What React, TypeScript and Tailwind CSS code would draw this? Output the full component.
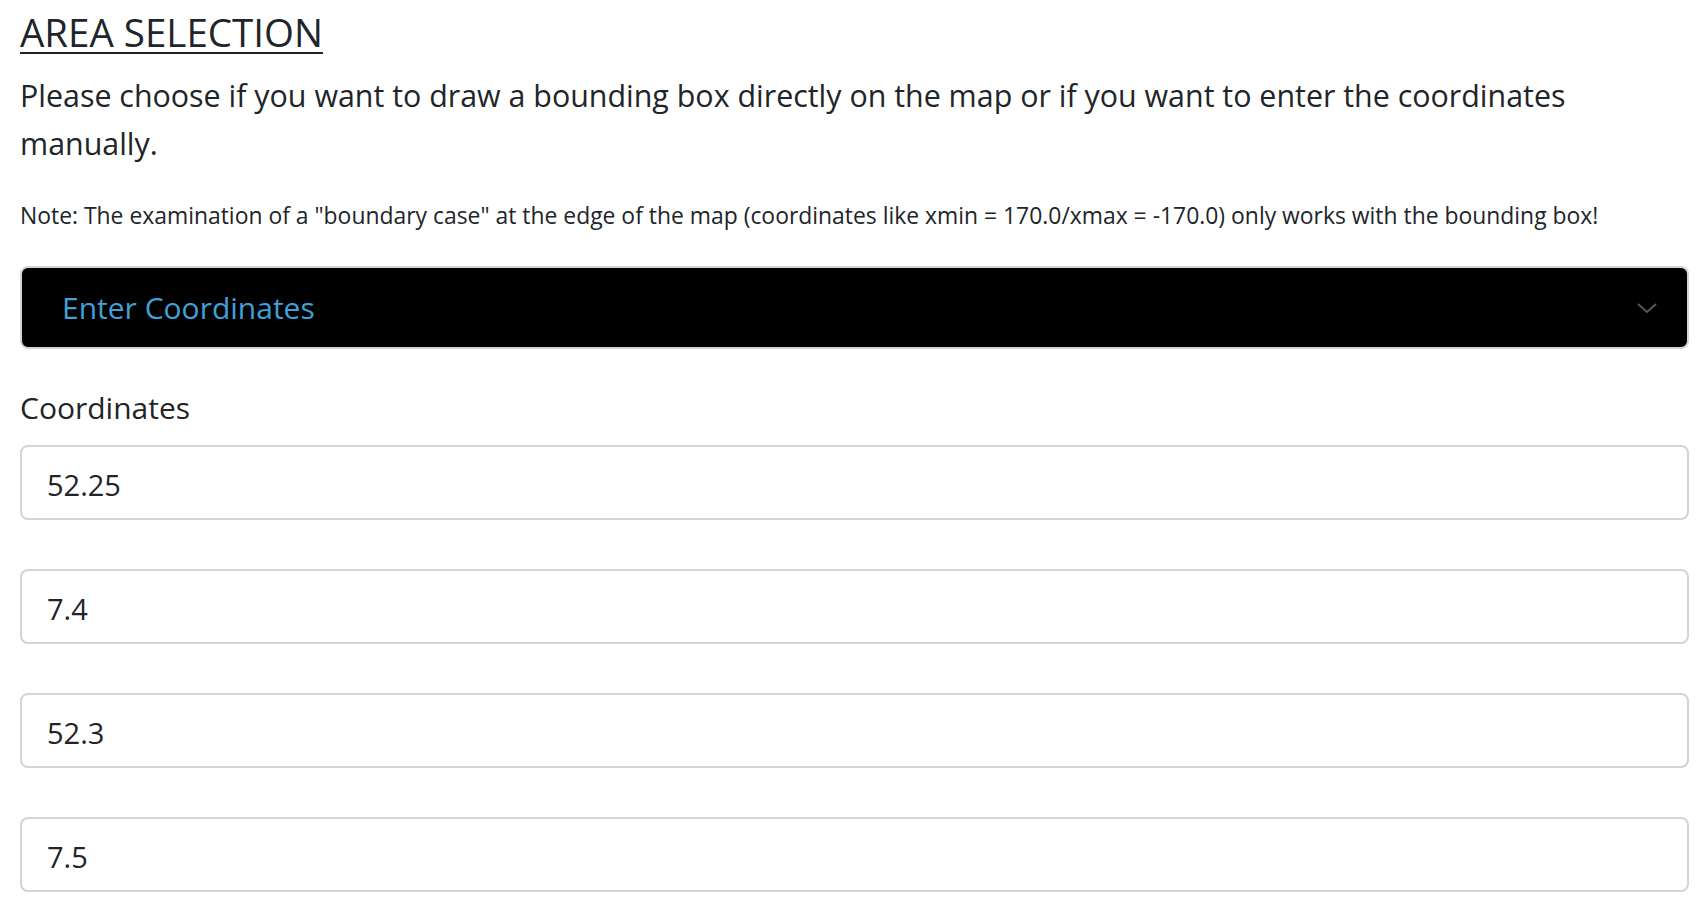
import { useState } from "react"

const values = ["52.25", "7.4", "52.3", "7.5"]

export default function App() {
  const [coords, setCoords] = useState<string[]>(values)
  const [open, setOpen] = useState(true)

  return (
    <div className="min-h-screen bg-white text-[#212529] pl-[20px] pr-[16px] pt-[8px] font-['Open_Sans',sans-serif]">
      <h2 className="text-[38.5px] leading-[48px] underline underline-offset-[5px] decoration-[2px]">
        AREA SELECTION
      </h2>
      <p className="mt-[16px] text-[30.4px] leading-[48px]">
        Please choose if you want to draw a bounding box directly on the map or if you want to enter the coordinates manually.
      </p>
      <p className="mt-[32px] text-[22.9px] leading-[32px]">
        Note: The examination of a "boundary case" at the edge of the map (coordinates like xmin = 170.0/xmax = -170.0) only works with the bounding box!
      </p>

      <button
        type="button"
        onClick={() => setOpen(!open)}
        className="mt-[34px] flex h-[83px] w-full items-center justify-between rounded-[8px] border-2 border-[#d2d4d6] bg-black pl-[40px] pr-[30px] text-left"
      >
        <span className="text-[30px] text-[#41a0d6]">Enter Coordinates</span>
        <svg width="20" height="10" viewBox="0 0 20 10" fill="none" className={open ? "" : "rotate-180"}>
          <path d="M1 1 L10 9 L19 1" stroke="#5a5a5a" strokeWidth="1.8" />
        </svg>
      </button>

      {open && (
        <div>
          <label className="mt-[39px] block text-[30px] leading-[40px]">Coordinates</label>
          <div className="mt-[17px] flex flex-col gap-[49px]">
            {coords.map((v, i) => (
              <input
                key={i}
                value={v}
                onChange={(e) => {
                  const next = [...coords]
                  next[i] = e.target.value
                  setCoords(next)
                }}
                className="h-[75px] w-full rounded-[8px] border-2 border-[#d2d4d6] bg-white px-[25px] pt-[4px] text-[29px] text-[#212529] outline-none"
              />
            ))}
          </div>
        </div>
      )}
    </div>
  )
}
